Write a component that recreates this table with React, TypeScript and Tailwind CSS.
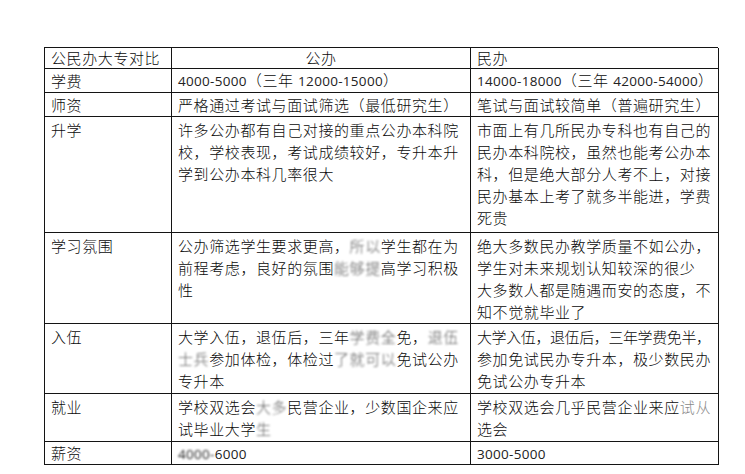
import React from "react";

const B = ({ children }: { children: React.ReactNode }) => (
  <span className="text-[#5a5a5a] blur-[1.2px]">{children}</span>
);
const N = ({ children }: { children: React.ReactNode }) => (
  <span className="text-[13.5px] font-normal tracking-[0.3px] text-[#222]">{children}</span>
);

type Cell = { lines: React.ReactNode[]; center?: boolean; single?: boolean };

const rows: { h: string; cells: Cell[] }[] = [
  {
    h: "h-[21px]",
    cells: [
      { lines: ["公民办大专对比"], single: true },
      { lines: ["公办"], single: true, center: true },
      { lines: ["民办"], single: true },
    ],
  },
  {
    h: "h-[24px]",
    cells: [
      { lines: ["学费"], single: true },
      {
        lines: [
          <>
            <N>4000-5000</N>（三年 <N>12000-15000</N>）
          </>,
        ],
        single: true,
      },
      {
        lines: [
          <>
            <N>14000-18000</N>（三年 <N>42000-54000</N>）
          </>,
        ],
        single: true,
      },
    ],
  },
  {
    h: "h-[24px]",
    cells: [
      { lines: ["师资"], single: true },
      { lines: ["严格通过考试与面试筛选（最低研究生）"], single: true },
      { lines: ["笔试与面试较简单（普遍研究生）"], single: true },
    ],
  },
  {
    h: "h-[116px]",
    cells: [
      { lines: ["升学"] },
      {
        lines: [
          "许多公办都有自己对接的重点公办本科院",
          "校，学校表现，考试成绩较好，专升本升",
          "学到公办本科几率很大",
        ],
      },
      {
        lines: [
          "市面上有几所民办专科也有自己的",
          "民办本科院校，虽然也能考公办本",
          "科，但是绝大部分人考不上，对接",
          "民办基本上考了就多半能进，学费",
          "死贵",
        ],
      },
    ],
  },
  {
    h: "h-[91px]",
    cells: [
      { lines: ["学习氛围"] },
      {
        lines: [
          <>
            公办筛选学生要求更高，<B>所以</B>学生都在为
          </>,
          <>
            前程考虑，良好的氛围<B>能够提</B>高学习积极
          </>,
          "性",
        ],
      },
      {
        lines: [
          "绝大多数民办教学质量不如公办，",
          "学生对未来规划认知较深的很少",
          "大多数人都是随遇而安的态度，不",
          "知不觉就毕业了",
        ],
      },
    ],
  },
  {
    h: "h-[70px]",
    cells: [
      { lines: ["入伍"] },
      {
        lines: [
          <>
            大学入伍，退伍后，三年<B>学费全</B>免，<B>退伍</B>
          </>,
          <>
            <B>士兵</B>参加体检，体检过<B>了就可以</B>免试公办
          </>,
          "专升本",
        ],
      },
      {
        lines: [
          <span className="tracking-[-0.4px]">大学入伍，退伍后，三年学费免半，</span>,
          "参加免试民办专升本，极少数民办",
          "免试公办专升本",
        ],
      },
    ],
  },
  {
    h: "h-[48px]",
    cells: [
      { lines: ["就业"] },
      {
        lines: [
          <>
            学校双选会<B>大多</B>民营企业，少数国企来应
          </>,
          <>
            试毕业大学<B>生</B>
          </>,
        ],
      },
      {
        lines: [
          <>
            学校双选会几乎民营企业来应<span className="text-[#8a8a8a]">试从</span>
          </>,
          "选会",
        ],
      },
    ],
  },
  {
    h: "h-[23px]",
    cells: [
      { lines: ["薪资"], single: true },
      {
        lines: [
          <>
            <B>
              <N>4000-</N>
            </B>
            <N>6000</N>
          </>,
        ],
        single: true,
      },
      { lines: [<N>3000-5000</N>], single: true },
    ],
  },
];

export default function App() {
  return (
    <div className="w-[745px] h-[474px] bg-white overflow-hidden font-['Open_Sans','Noto_Sans_CJK_SC',sans-serif] text-[15px] font-light tracking-[0.6px] text-[#0a0a0a]">
      <div className="ml-[44px] mt-[47px] w-[674px] border-l border-t border-[#141414] grid grid-cols-[127px_299px_248px]">
        {rows.map((r, ri) =>
          r.cells.map((c, ci) => (
            <div
              key={ri + "-" + ci}
              className={
                "border-r border-b border-[#141414] px-[6px] flex flex-col box-border " +
                r.h +
                (c.single ? " justify-center" : " pt-[2px]") +
                (c.center ? " items-center" : "")
              }
            >
              {c.lines.map((l, li) => (
                <div key={li} className="whitespace-nowrap leading-[22px]">
                  {l}
                </div>
              ))}
            </div>
          ))
        )}
      </div>
    </div>
  );
}
